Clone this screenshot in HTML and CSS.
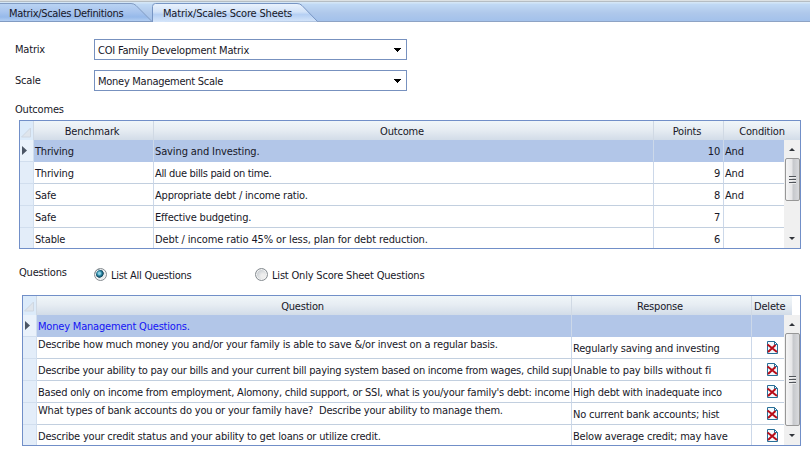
FILE: index.html
```html
<!DOCTYPE html>
<html lang="en">
<head>
<meta charset="utf-8">
<title>Matrix/Scales Score Sheets</title>
<link rel="stylesheet" href="styles.css">
</head>
<body>
<svg class="defs" width="0" height="0">
  <defs>
    <linearGradient id="tabOff" x1="0" y1="0" x2="0" y2="1"><stop offset="0" stop-color="#bad4f3"/><stop offset=".45" stop-color="#a9c5ee"/><stop offset=".75" stop-color="#96b9ea"/><stop offset="1" stop-color="#b5d0f3"/></linearGradient>
    <linearGradient id="tabOn" x1="0" y1="0" x2="0" y2="1"><stop offset="0" stop-color="#eaf3fd"/><stop offset=".45" stop-color="#d2e2f8"/><stop offset=".6" stop-color="#b5cff3"/><stop offset="1" stop-color="#d6e6fa"/></linearGradient>
    <symbol id="del" viewBox="0 0 13 14">
      <path d="M1.500 .5h7l3 3v9h-10z" fill="#f4fafd" stroke="#286f98"/>
      <path d="M8.500 .5v3h3" fill="none" stroke="#286f98"/>
      <path d="M1.500 3.500l9.500 7.500M9.500 4L2 11" stroke="#b80d18" stroke-width="2"/>
    </symbol>
  </defs>
</svg>
<nav class="tabs">
  <div class="tab first"><svg width="154" height="19"><path d="M-1 .5H131q3 0 5 2L152 18.5H-1z" fill="url(#tabOff)" stroke="#819bc2"/></svg><span class="tight">Matrix/Scales Definitions</span></div>
  <div class="tab second"><svg width="167" height="19"><path d="M.5 19V3.500q0-3 3-3H145q3 0 5 2L165.500 18.500" fill="url(#tabOn)" stroke="#7795c3"/></svg><span>Matrix/Scales Score Sheets</span></div>
</nav>
<main>
  <div class="field"><label>Matrix</label><div class="combo"><span>COI Family Development Matrix</span><svg width="7" height="4" shape-rendering="crispEdges"><path d="M0 0h7v1H6v1H5v1H4v1H3V3H2V2H1V1H0z"/></svg></div></div>
  <div class="field"><label>Scale</label><div class="combo"><span class="scale">Money Management Scale</span><svg width="7" height="4" shape-rendering="crispEdges"><path d="M0 0h7v1H6v1H5v1H4v1H3V3H2V2H1V1H0z"/></svg></div></div>
  <h2><span>Outcomes</span></h2>

  <section class="grid outcomes">
    <div class="row head"><i class="ind"><svg width="13" height="19"><path d="M10.500 7v9h-9z" fill="#dfe5ec" stroke="#ced7e2"/></svg></i><b>Benchmark</b><b>Outcome</b><b>Points</b><b class="cond">Condition</b></div>
    <div class="body">
      <div class="rows">
        <div class="row sel"><i class="ind"><svg width="5" height="9"><path d="M0 0l5 4.500L0 9z" fill="#4c5665"/></svg></i><span>Thriving</span><span class="loose">Saving and Investing.</span><span class="num">10</span><span>And</span></div>
        <div class="row"><i class="ind"></i><span>Thriving</span><span class="tight">All due bills paid on time.</span><span class="num">9</span><span>And</span></div>
        <div class="row"><i class="ind"></i><span>Safe</span><span>Appropriate debt / income ratio.</span><span class="num">8</span><span>And</span></div>
        <div class="row"><i class="ind"></i><span>Safe</span><span>Effective budgeting.</span><span class="num">7</span><span></span></div>
        <div class="row"><i class="ind"></i><span>Stable</span><span class="loose">Debt / income ratio 45% or less, plan for debt reduction.</span><span class="num">6</span><span></span></div>
      </div>
      <div class="scroll"><div class="arrow up"></div><div class="thumb"><i></i></div><div class="arrow down"></div></div>
    </div>
  </section>

  <div class="filter">
    <span class="caption">Questions</span>
    <div class="option all"><i class="radio on"></i><span class="list-all">List All Questions</span></div>
    <div class="option only"><i class="radio"></i><span>List Only Score Sheet Questions</span></div>
  </div>

  <section class="grid questions">
    <div class="row head"><i class="ind"><svg width="13" height="19"><path d="M10.500 6v9h-9z" fill="#dfe5ec" stroke="#ced7e2"/></svg></i><b>Question</b><b>Response</b><b class="delhead">Delete</b></div>
    <div class="body">
      <div class="rows">
        <div class="row sel"><i class="ind"><svg width="5" height="9"><path d="M0 0l5 4.500L0 9z" fill="#4c5665"/></svg></i><span class="link">Money Management Questions.</span><span></span><span></span></div>
        <div class="row"><i class="ind"></i><span class="high">Describe how much money you and/or your family is able to save &amp;/or invest on a regular basis.</span><span>Regularly saving and investing</span><span class="del"><svg width="13" height="14"><use href="#del"/></svg></span></div>
        <div class="row"><i class="ind"></i><span class="q2">Describe your ability to pay our bills and your current bill paying system based on income from wages, child supp</span><span class="loose">Unable to pay bills without fi</span><span class="del"><svg width="13" height="14"><use href="#del"/></svg></span></div>
        <div class="row"><i class="ind"></i><span class="q3">Based only on income from employment, Alomony, child support, or SSI, what is you/your family's debt: income</span><span class="q3">High debt with inadequate inco</span><span class="del"><svg width="13" height="14"><use href="#del"/></svg></span></div>
        <div class="row"><i class="ind"></i><span class="high q4">What types of bank accounts do you or your family have?&nbsp; Describe your ability to manage them.</span><span>No current bank accounts; hist</span><span class="del"><svg width="13" height="14"><use href="#del"/></svg></span></div>
        <div class="row"><i class="ind"></i><span>Describe your credit status and your ability to get loans or utilize credit.</span><span>Below average credit; may have</span><span class="del"><svg width="13" height="14"><use href="#del"/></svg></span></div>
      </div>
      <div class="scroll long"><div class="arrow up"></div><div class="thumb"><i></i></div><div class="arrow down"></div></div>
    </div>
  </section>
</main>
</body>
</html>
```
FILE: styles.css
```css
* { box-sizing: border-box; }
body { margin: 0; height: 453px; overflow: hidden; background: #fff; color: #171727; font: 11px/14px "DejaVu Sans Condensed", "DejaVu Sans", sans-serif; font-stretch: condensed; letter-spacing: -.19px; white-space: nowrap; }
.tight { letter-spacing: -.33px; }
.scale, .list-all { letter-spacing: -.27px; }
.loose { letter-spacing: -.12px; }
.defs { position: absolute; }
i, b { font-style: normal; font-weight: normal; }
svg { display: block; }
.tabs { display: flex; height: 22px; padding-top: 3px; border-bottom: 1px solid #8ea3c4; background: linear-gradient(#dce1e3 0 1px, #b5bdc3 1px 2px, #d4e6f6 2px 3px, #c1daf5 4px, #afc8eb 13px, #a4c2eb 20px); }
.tab { display: grid; height: 19px; }
.tab > * { grid-area: 1 / 1; }
.tab span { padding: 4px 0 0 9px; }
.first { width: 152px; }
.second span { padding-left: 11px; }
main { padding: 17px 9px 0 15px; }
.field { display: flex; height: 31px; }
.field label { width: 79px; padding-top: 4px; }
.combo { display: flex; align-items: center; justify-content: space-between; width: 313px; height: 21px; padding: 0 5px 0 3px; border: 1px solid #7791bf; }
.combo span { padding-top: 2px; }
h2 { margin: 0; padding-top: 2px; height: 19px; font-size: 11px; font-weight: normal; line-height: 14px; }
.grid { border: 1px solid #718fc8; overflow: hidden; }
.row { display: grid; height: 22px; }
.row > * { display: flex; align-items: center; overflow: hidden; border-right: 1px solid #ccd8e9; border-bottom: 1px solid #c2cfdf; padding: 2px 0 0 1px; }
.row > .ind { justify-content: center; padding: 0; background: #e3edf9; border-color: #d1deee; }
.row > :last-child { border-right: 0; }
.head { height: 19px; background: linear-gradient(#f0f6f9, #e7edf3 45%, #d2dce8); }
.row.head > * { justify-content: center; border-bottom: 0; border-color: #d0d9e4; padding: 3px 3px 0 0; }
.row.head > .ind { background: #dcebfa; padding: 0; }
.row.head > .cond { padding-right: 0; }
.sel > * { background: #b2c6e8; border-bottom-color: #b2c6e8; }
.sel > .ind { background: #eaf2fb; justify-content: flex-start; padding-left: 2px; }
.row .num { justify-content: flex-end; padding-right: 3px; }
.body { display: flex; }
.rows { flex: 1; min-width: 0; }
.outcomes { height: 129px; margin-left: 4px; }
.outcomes .body { height: 108px; }
.outcomes .row { grid-template-columns: 14px 120px 500px 70px 1fr; }
.filter { display: flex; height: 46px; padding: 16px 0 0 4px; }
.caption { width: 75px; padding-top: 1px; }
.option { display: flex; height: 19px; }
.option span { padding-top: 4px; }
.all { width: 161px; }
.radio { width: 13px; height: 13px; margin: 3px 4px 0 0; border: 1px solid #858b90; border-radius: 50%; background: radial-gradient(circle at 65% 65%, #eee 20%, #c8cdd2 70%); box-shadow: inset 0 0 0 1px #f4f4f4; }
.option .on { background: radial-gradient(circle at 40% 40%, #8ed3e6 0 1px, #237e9c 2.500px, #114258 4px, #e6eaed 4.500px); }
.questions { height: 151px; margin-left: 7px; }
.questions .body { height: 130px; }
.questions .row { grid-template-columns: 14px 535px 180px 1fr; }
.questions .head { margin-right: 8px; }
.row.head .delhead { justify-content: flex-start; padding: 3px 0 0 2px; }
.row .high { align-items: flex-start; padding-top: 1px; }
.row .link { color: #1414f5; }
.q2 { letter-spacing: -.24px; }
.q3 { letter-spacing: -.22px; }
.q4 { letter-spacing: -.2px; }
.row .del { justify-content: flex-end; padding: 0 5px 0 0; }
.scroll { display: flex; flex-direction: column; align-items: center; width: 16px; background: #f0f0f0; }
.arrow { width: 0; height: 0; border: 0 solid transparent; }
.up { margin: 8px 0 7px; border-width: 0 3px 3px; border-bottom-color: #30343a; }
.down { margin: auto 0 8px; border-width: 3px 3px 0; border-top-color: #30343a; }
.thumb { display: flex; align-items: center; justify-content: center; width: 15px; height: 43px; border: 1px solid #979797; border-radius: 2px; background: linear-gradient(90deg, #f5f5f5, #e6e6e8 45%, #c6c8cc 55%, #d9dadd); }
.thumb i { width: 7px; height: 8px; background: repeating-linear-gradient(#50545a 0 1px, #eee 1px 2px, transparent 2px 3px); }
.long .thumb { height: 93px; }
```
